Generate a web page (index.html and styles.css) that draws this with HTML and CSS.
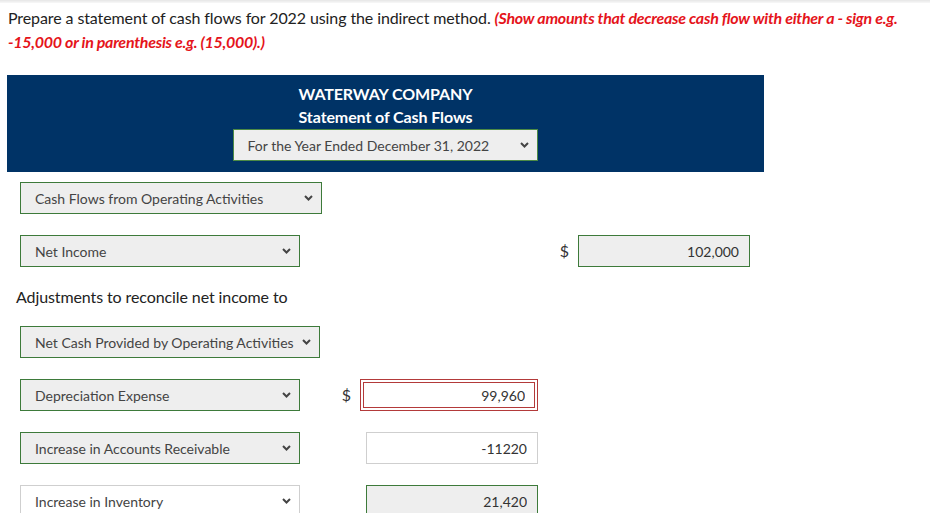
FILE: index.html
```html
<!DOCTYPE html>
<html lang="en">
<head>
<meta charset="utf-8">
<title>Statement of Cash Flows</title>
<link rel="stylesheet" href="styles.css">
</head>
<body>
<div class="topbar"></div>
<p class="intro"><span class="plain-text">Prepare a statement of cash flows for 2022 using the indirect method. </span><em class="warn">(Show amounts that decrease cash flow with either a - sign e.g. -15,000 or in parenthesis e.g. (15,000).)</em></p>

<div class="header">
  <div class="company">WATERWAY COMPANY</div>
  <div class="title">Statement of Cash Flows</div>
  <div class="sel sel-period">
    <select><option>For the Year Ended December 31, 2022</option></select>
    <svg class="chev" viewBox="0 0 9 6" width="9" height="6"><path d="M1 1 L4.5 4.5 L8 1" fill="none" stroke="#444" stroke-width="2"/></svg>
  </div>
</div>

<div class="main">
  <div class="row r1">
    <div class="sel w302">
      <select><option>Cash Flows from Operating Activities</option></select>
      <svg class="chev" viewBox="0 0 9 6" width="9" height="6"><path d="M1 1 L4.5 4.5 L8 1" fill="none" stroke="#444" stroke-width="2"/></svg>
    </div>
  </div>

  <div class="row r2">
    <div class="sel w280">
      <select><option>Net Income</option></select>
      <svg class="chev" viewBox="0 0 9 6" width="9" height="6"><path d="M1 1 L4.5 4.5 L8 1" fill="none" stroke="#444" stroke-width="2"/></svg>
    </div>
    <div class="col1"></div>
    <div class="col2">
      <span class="dollar">$</span>
      <input class="amt filled" type="text" value="102,000">
    </div>
  </div>

  <div class="adj">Adjustments to reconcile net income to</div>

  <div class="row r3">
    <div class="sel w300">
      <select><option>Net Cash Provided by Operating Activities</option></select>
      <svg class="chev" viewBox="0 0 9 6" width="9" height="6"><path d="M1 1 L4.5 4.5 L8 1" fill="none" stroke="#444" stroke-width="2"/></svg>
    </div>
  </div>

  <div class="row r4">
    <div class="sel w280">
      <select><option>Depreciation Expense</option></select>
      <svg class="chev" viewBox="0 0 9 6" width="9" height="6"><path d="M1 1 L4.5 4.5 L8 1" fill="none" stroke="#444" stroke-width="2"/></svg>
    </div>
    <div class="col1">
      <span class="dollar">$</span>
      <div class="wrong"><input class="amt bad" type="text" value="99,960"></div>
    </div>
  </div>

  <div class="row r5">
    <div class="sel w280">
      <select><option>Increase in Accounts Receivable</option></select>
      <svg class="chev" viewBox="0 0 9 6" width="9" height="6"><path d="M1 1 L4.5 4.5 L8 1" fill="none" stroke="#444" stroke-width="2"/></svg>
    </div>
    <div class="col1">
      <input class="amt plain" type="text" value="-11220">
    </div>
  </div>

  <div class="row r6">
    <div class="sel w280 blank">
      <select><option>Increase in Inventory</option></select>
      <svg class="chev" viewBox="0 0 9 6" width="9" height="6"><path d="M1 1 L4.5 4.5 L8 1" fill="none" stroke="#444" stroke-width="2"/></svg>
    </div>
    <div class="col1">
      <input class="amt filled" type="text" value="21,420">
    </div>
  </div>
</div>
</body>
</html>
```

FILE: styles.css
```css
* { box-sizing: border-box; }
html, body { margin: 0; padding: 0; background: #fff; }
body {
  font-family: Lato, "Open Sans", "Liberation Sans", sans-serif;
  color: #222;
  width: 930px;
  height: 513px;
  overflow: hidden;
}
.topbar {
  height: 3px;
  background: linear-gradient(#e6e6e6, #f8f8f8);
}
.intro {
  margin: 3px 8px 0 8px;
  font-size: 16px;
  line-height: 24px;
  color: #222;
}
.plain-text { letter-spacing: -0.1px; }
.warn {
  color: #e5141b;
  font-weight: 700;
  font-style: italic;
  letter-spacing: -0.27px;
}
.header {
  margin: 21px 0 0 7px;
  width: 757px;
  height: 97px;
  background: #003366;
  color: #fff;
  text-align: center;
  padding-top: 7px;
  display: flex;
  flex-direction: column;
  align-items: center;
}
.company, .title {
  font-weight: 700;
  font-size: 16px;
  line-height: 23px;
  letter-spacing: -0.1px;
}
.sel {
  position: relative;
  height: 32px;
}
.sel select {
  appearance: none;
  -webkit-appearance: none;
  width: 100%;
  height: 32px;
  margin: 0;
  border: 1px solid #3d7a3a;
  border-radius: 0;
  background: #eeeeee;
  font-family: Lato, "Open Sans", "Liberation Sans", sans-serif;
  font-size: 14px;
  color: #444;
  padding: 0 24px 0 14px;
  outline: none;
}
.sel .chev {
  position: absolute;
  right: 9px;
  top: 13px;
  pointer-events: none;
}
.sel.blank select {
  background: #fff;
  border-color: #cfcfcf;
}
.sel-period {
  width: 305px;
  margin-top: 1px;
  margin-left: -1px;
}
.sel-period select { border-color: #4c8a45; }
.w302 { width: 302px; }
.w300 { width: 300px; }
.w280 { width: 280px; }

.main {
  padding-left: 20px;
}
.row {
  display: flex;
  align-items: center;
  height: 32px;
  margin-top: 21px;
}
.r1 { margin-top: 10px; }
.r3 { margin-top: 17px; }
.adj {
  margin: 18px 0 0 -4px;
  font-size: 16px;
  line-height: 24px;
  color: #222;
  letter-spacing: -0.1px;
}
.col1 {
  width: 238px;
  display: flex;
  justify-content: flex-end;
  align-items: center;
  height: 32px;
}
.col2 {
  width: 212px;
  display: flex;
  justify-content: flex-end;
  align-items: center;
  height: 32px;
}
.dollar {
  font-size: 16px;
  color: #333;
  line-height: 20px;
}
.col1 .dollar { margin-right: 9px; }
.col2 .dollar { margin-right: 9px; }
.amt {
  width: 172px;
  height: 32px;
  margin: 0;
  border-radius: 0;
  font-family: Lato, "Open Sans", "Liberation Sans", sans-serif;
  font-size: 14px;
  color: #333;
  text-align: right;
  padding: 0 10px 0 6px;
  outline: none;
}
.amt.filled {
  background: #eeeeee;
  border: 1px solid #3d7a3a;
}
.amt.plain {
  background: #fff;
  border: 1px solid #cfcfcf;
}
.wrong {
  width: 178px;
  height: 32px;
  border: 1px solid #b33a3a;
  padding: 2px;
}
.amt.bad {
  width: 100%;
  height: 26px;
  background: #fff;
  border: 1px solid #b33a3a;
  padding-right: 9px;
}
```
